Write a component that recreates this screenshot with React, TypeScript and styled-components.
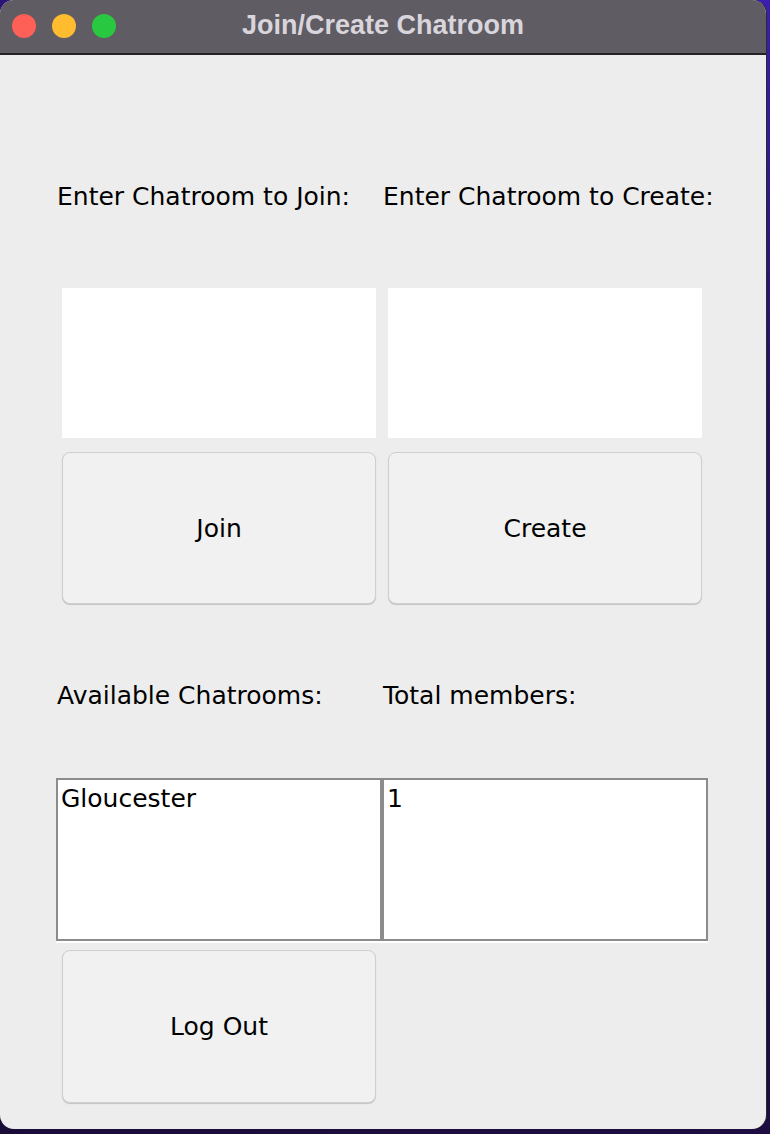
import React from 'react'
import styled, { createGlobalStyle } from 'styled-components'

const GlobalStyle = createGlobalStyle`
  html, body {
    margin: 0;
    padding: 0;
    background: linear-gradient(200deg, #3d1fb0 0%, #25105a 30%, #1a0c38 100%);
    min-height: 1134px;
  }
`

const Window = styled.div`
  width: 766px;
  height: 1129px;
  background: #ededed;
  border-radius: 14px;
  overflow: hidden;
  display: flex;
  flex-direction: column;
  box-shadow: 1px 0 0 #2a2a2a;
`

const TitleBar = styled.div`
  height: 53px;
  flex: 0 0 53px;
  background: #5f5c63;
  border-bottom: 2px solid #232323;
  display: flex;
  align-items: center;
  justify-content: center;
  position: relative;
`

const Lights = styled.div`
  position: absolute;
  left: 12px;
  top: 14px;
  display: flex;
  gap: 16px;
`

const Light = styled.span<{ $color: string }>`
  width: 24px;
  height: 24px;
  border-radius: 50%;
  background: ${(p) => p.$color};
`

const Title = styled.div`
  font-family: 'Liberation Sans', Arial, sans-serif;
  font-weight: bold;
  font-size: 27px;
  color: #d9d5dc;
  margin-top: -2px;
`

const Content = styled.div`
  padding-left: 56px;
  width: 652px;
  font-family: 'DejaVu Sans', 'Liberation Sans', sans-serif;
  color: #000;
`

const Row = styled.div<{ $top: number; $height: number }>`
  display: grid;
  grid-template-columns: 326px 326px;
  margin-top: ${(p) => p.$top}px;
  height: ${(p) => p.$height}px;
`

const Label = styled.div`
  font-size: 25px;
  line-height: 40px;
  padding-left: 1px;
  white-space: nowrap;
`

const Field = styled.div`
  margin-left: 6px;
  width: 314px;
  height: 150px;
  background: #fff;
`

const Button = styled.button`
  margin-left: 6px;
  width: 314px;
  height: 100%;
  box-sizing: border-box;
  background: #f1f1f1;
  border: 1px solid #cfcfcf;
  border-radius: 8px;
  box-shadow: 0 1px 1px rgba(0, 0, 0, 0.18);
  font-family: 'DejaVu Sans', 'Liberation Sans', sans-serif;
  font-size: 25px;
  color: #000;
  padding: 0;
`

const ListBox = styled.div`
  box-sizing: border-box;
  height: 163px;
  width: 326px;
  background: #fff;
  border: 2px solid #8c8c8c;
  box-shadow: 0 2px 0 #fff;
  font-size: 25px;
  line-height: 38px;
  padding-left: 3px;
`

export default function App() {
  return (
    <>
      <GlobalStyle />
      <Window>
        <TitleBar>
          <Lights>
            <Light $color="#fe5f57" />
            <Light $color="#febc2e" />
            <Light $color="#28c840" />
          </Lights>
          <Title>Join/Create Chatroom</Title>
        </TitleBar>
        <Content>
          <Row $top={122} $height={40}>
            <Label>Enter Chatroom to Join:</Label>
            <Label>Enter Chatroom to Create:</Label>
          </Row>
          <Row $top={71} $height={150}>
            <Field />
            <Field />
          </Row>
          <Row $top={14} $height={152}>
            <Button>Join</Button>
            <Button>Create</Button>
          </Row>
          <Row $top={72} $height={40}>
            <Label>Available Chatrooms:</Label>
            <Label>Total members:</Label>
          </Row>
          <Row $top={62} $height={163}>
            <ListBox>Gloucester</ListBox>
            <ListBox>1</ListBox>
          </Row>
          <Row $top={9} $height={153}>
            <Button>Log Out</Button>
          </Row>
        </Content>
      </Window>
    </>
  )
}
